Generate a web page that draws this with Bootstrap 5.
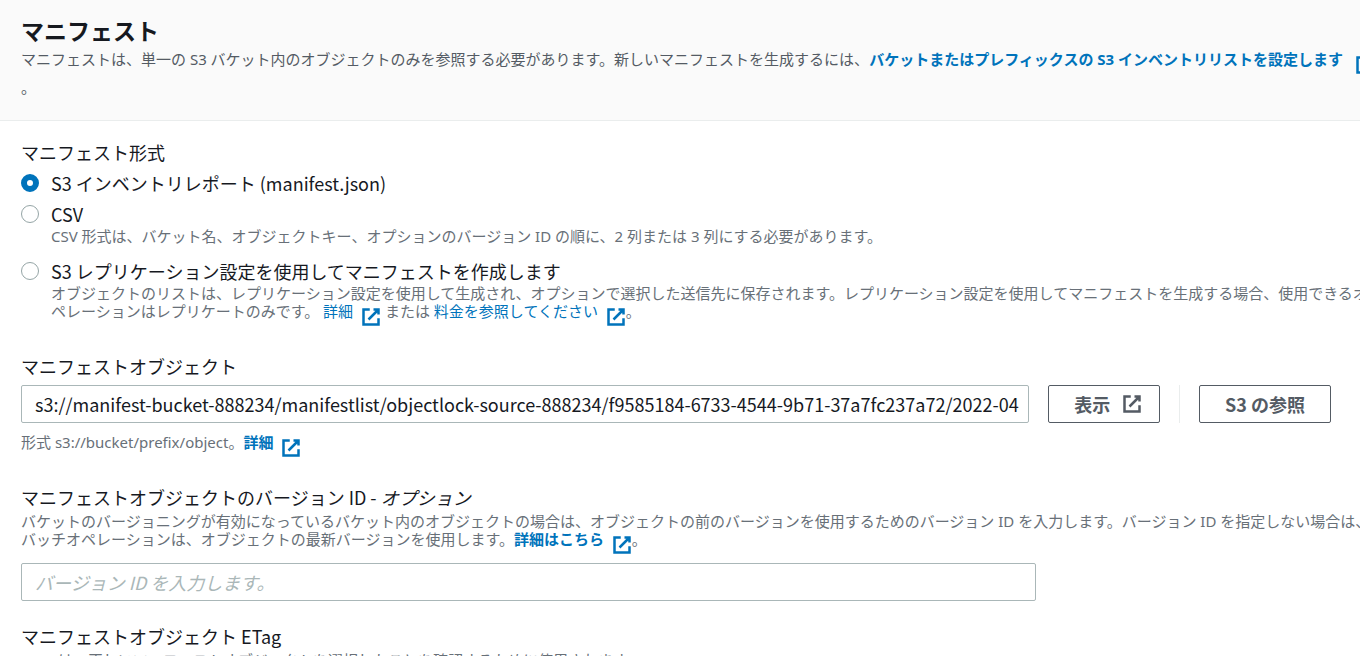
<!DOCTYPE html>
<html lang="ja">
<head>
<meta charset="utf-8">
<meta name="viewport" content="width=device-width, initial-scale=1">
<title>マニフェスト</title>
<link href="https://cdn.jsdelivr.net/npm/bootstrap@5.3.0/dist/css/bootstrap.min.css" rel="stylesheet">
<style>
  body { font-family: "Noto Sans", "Noto Sans CJK JP", sans-serif; font-size: 18px; line-height: 22px; color: #16191f; overflow-x: hidden; }
  a { color: #0073bb; text-decoration: none; }
  /* the panel runs a little past the right edge of the window */
  .panel { width: calc(100% + 35px); }
  .panel-head { background: #fafafa; border-bottom: 1px solid #eaeded; padding: 17px 21px 19px; }
  .panel-head h2 { font-size: 23px; line-height: 28px; font-weight: 700; margin: 0; }
  .panel-head p { font-size: 15px; line-height: 28px; color: #545b64; margin: 0; white-space: nowrap; }
  .panel-main { padding: 20px 21px; }
  .field-label, .choice label { font-family: "Noto Sans CJK JP", sans-serif; font-size: 18px; line-height: 22px; margin: 0; }
  .field-label { display: block; }
  .field-gap { margin-top: 34px; }
  .hint { font-size: 15px; line-height: 18px; color: #687078; white-space: nowrap; margin: 0; }
  .form-control + .hint, .path-row + .hint { margin-top: 10px; }
  .hint + .form-control { margin-top: 14px; }
  .choice { display: grid; grid-template-columns: 18px 1fr; column-gap: 12px; row-gap: 2px; align-items: center; margin-top: 9px; }
  .choice:last-child { margin-top: 15px; }
  .choice .hint { grid-column: 2; }
  .choice .form-check-input { width: 18px; height: 18px; margin: 0; border: 1px solid #95a5a6; background: #fff; }
  .choice .form-check-input:checked { border: 6px solid #0073bb; background: #fff; }
  .form-control { height: 38px; font-family: "Noto Sans CJK JP", sans-serif; font-size: 18px; line-height: 22px; padding: 7px 5px 7px 13px; border-color: #aab7b8; border-radius: 2px; color: #16191f; }
  .form-control::placeholder { color: #aab7b8; font-style: italic; }
  .path-row { gap: 19px; padding-right: 43px; }
  .btn-plain { height: 38px; border: 1px solid #545b64; border-radius: 2px; color: #545b64; background: #fff; font-family: "Noto Sans CJK JP", sans-serif; font-size: 18px; font-weight: 700; line-height: 22px; padding: 0 25px; white-space: nowrap; }
  .ext { width: 20px; height: 20px; fill: none; stroke: currentColor; stroke-width: 2; vertical-align: -4px; margin: -6px 0 -6px 4px; }
  .btn-plain .ext { margin: 0 -8px 0 12px; }
  .rule { width: 1px; background: #eaeded; }
</style>
</head>
<body>
<svg class="d-none" aria-hidden="true"><symbol id="ext" viewBox="0 0 16 16"><path d="M10 2h4v4M6 10l8-8M14 9v5H2V2h5"/></symbol></svg>
<main class="panel">
  <header class="panel-head">
    <h2>マニフェスト</h2>
    <p>マニフェストは、単一の S3 バケット内のオブジェクトのみを参照する必要があります。新しいマニフェストを生成するには、<a href="#" class="fw-bold">バケットまたはプレフィックスの S3 インベントリリストを設定します <svg class="ext ms-2"><use href="#ext"/></svg></a><br>。</p>
  </header>
  <form class="panel-main">
    <fieldset>
      <legend class="field-label float-none">マニフェスト形式</legend>
      <div class="choice">
        <input class="form-check-input" type="radio" name="format" id="f1" checked>
        <label for="f1">S3 インベントリレポート (manifest.json)</label>
      </div>
      <div class="choice">
        <input class="form-check-input" type="radio" name="format" id="f2">
        <label for="f2">CSV</label>
        <p class="hint">CSV 形式は、バケット名、オブジェクトキー、オプションのバージョン ID の順に、2 列または 3 列にする必要があります。</p>
      </div>
      <div class="choice">
        <input class="form-check-input" type="radio" name="format" id="f3">
        <label for="f3">S3 レプリケーション設定を使用してマニフェストを作成します</label>
        <p class="hint">オブジェクトのリストは、レプリケーション設定を使用して生成され、オプションで選択した送信先に保存されます。レプリケーション設定を使用してマニフェストを生成する場合、使用できるオ<br>ペレーションはレプリケートのみです。 <a href="#">詳細 <svg class="ext"><use href="#ext"/></svg></a> または <a href="#">料金を参照してください <svg class="ext"><use href="#ext"/></svg></a>。</p>
      </div>
    </fieldset>

    <div class="field-gap">
      <label class="field-label mb-2" for="obj">マニフェストオブジェクト</label>
      <div class="d-flex path-row">
        <input class="form-control flex-fill" id="obj" type="text" value="s3://manifest-bucket-888234/manifestlist/objectlock-source-888234/f9585184-6733-4544-9b71-37a7fc237a72/2022-04">
        <button type="button" class="btn btn-plain d-flex align-items-center">表示<svg class="ext"><use href="#ext"/></svg></button>
        <div class="rule"></div>
        <button type="button" class="btn btn-plain">S3 の参照</button>
      </div>
      <p class="hint">形式 s3://bucket/prefix/object。<a href="#" class="fw-bold">詳細 <svg class="ext"><use href="#ext"/></svg></a></p>
    </div>

    <div class="field-gap">
      <label class="field-label mb-1" for="ver">マニフェストオブジェクトのバージョン ID - <i>オプション</i></label>
      <p class="hint">バケットのバージョニングが有効になっているバケット内のオブジェクトの場合は、オブジェクトの前のバージョンを使用するためのバージョン ID を入力します。バージョン ID を指定しない場合は、<br>バッチオペレーションは、オブジェクトの最新バージョンを使用します。<a href="#" class="fw-bold">詳細はこちら <svg class="ext"><use href="#ext"/></svg></a>。</p>
      <input class="form-control w-75" id="ver" type="text" placeholder="バージョン ID を入力します。">
    </div>

    <div class="mt-4">
      <span class="field-label mb-1">マニフェストオブジェクト ETag</span>
      <p class="hint">ETag は、正しいマニフェストオブジェクトを選択したことを確認するために使用されます。</p>
    </div>
  </form>
</main>
<script src="https://cdn.jsdelivr.net/npm/bootstrap@5.3.0/dist/js/bootstrap.bundle.min.js"></script>
</body>
</html>
